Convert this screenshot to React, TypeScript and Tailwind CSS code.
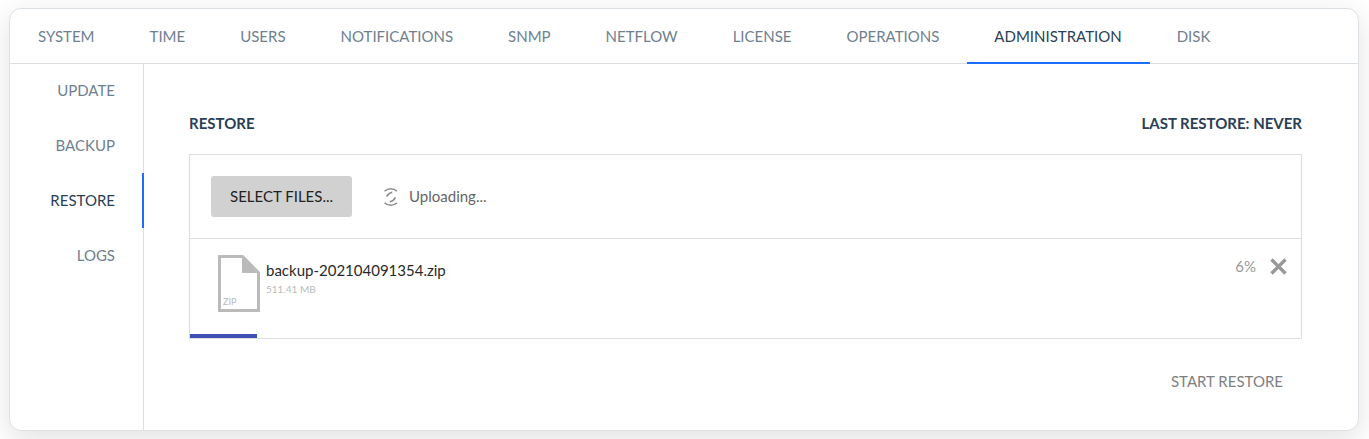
import React from "react";

const tabs = [
  "System",
  "Time",
  "Users",
  "Notifications",
  "SNMP",
  "Netflow",
  "License",
  "Operations",
  "Administration",
  "Disk",
];

const sections = ["Update", "Backup", "Restore", "Logs"];

function Tab({ label, active }: { label: string; active: boolean }) {
  return (
    <a
      href="#"
      aria-current={active ? "page" : undefined}
      className={
        "flex h-full items-center border-b-2 pr-7 pl-[27px] " +
        (active ? "border-[#1a6dff] text-[#2a3f55]" : "border-transparent text-[#6f7f8f]")
      }
    >
      {label}
    </a>
  );
}

function SectionLink({ label, active }: { label: string; active: boolean }) {
  return (
    <a
      href="#"
      aria-current={active ? "page" : undefined}
      className={
        "-mr-px flex h-[55px] items-center justify-end border-r-2 pr-[27px] pb-0.5 " +
        (active ? "border-[#1a6dff] text-[#2a3f55]" : "border-transparent text-[#6f7f8f]")
      }
    >
      {label}
    </a>
  );
}

function Spinner() {
  return (
    <svg viewBox="0 0 16 20" className="h-5 w-4" fill="none" stroke="#8c8c8c" strokeWidth="1.5" aria-hidden="true">
      <path d="M1.5 4.2C5 0.8 10.5 0.8 14 4.2" />
      <path d="M1.5 15.8C5 19.2 10.5 19.2 14 15.8" />
      <path d="M3.6 9.6C4.6 7.4 6.4 5.8 9.2 5.2" />
      <path d="M12.4 10.4C11.4 12.6 9.6 14.2 6.8 14.8" />
    </svg>
  );
}

function FileIcon() {
  return (
    <div className="relative mt-px h-[57px] w-[42px] shrink-0">
      <svg viewBox="0 0 42 57" className="h-full w-full" aria-hidden="true">
        <path d="M1.5 1.5H24.5L40.5 17.5V55.5H1.5Z" fill="none" stroke="#bababa" strokeWidth="3" />
        <path d="M24 0L42 18H24Z" fill="#bababa" />
      </svg>
      <span className="absolute bottom-1 left-[5px] text-[9px] leading-3 text-[#bababa]">ZIP</span>
    </div>
  );
}

export default function App() {
  return (
    <div className="bg-white pt-2 pr-2.5 pb-2 pl-[9px] font-['Lato',sans-serif] text-[15px] leading-6">
      <div className="rounded-xl border border-[#dce1e6] bg-white shadow-[0_8px_30px_rgba(0,0,0,0.12)]">
        <nav className="flex h-[55px] border-b border-[#dcdfe2] pl-px uppercase">
          <div className="-mb-px flex">
            {tabs.map((t) => (
              <Tab key={t} label={t} active={t === "Administration"} />
            ))}
          </div>
        </nav>

        <div className="flex">
          <aside className="w-[134px] shrink-0 border-r border-[#dcdfe2] uppercase">
            <nav className="-mt-px">
              {sections.map((s) => (
                <SectionLink key={s} label={s} active={s === "Restore"} />
              ))}
            </nav>
          </aside>

          <main className="min-w-0 flex-1 pt-[47px] pr-14 pb-[37px] pl-[45px]">
            <div className="flex justify-between font-bold text-[#2a3f55] uppercase">
              <h2>Restore</h2>
              <p>Last restore: never</p>
            </div>

            <div className="mt-[19px] border border-[#dedede]">
              <div className="flex items-center border-b border-[#dedede] p-[21px]">
                <button
                  type="button"
                  className="h-[41px] rounded-[3px] bg-[#d1d1d1] px-[19px] pb-0.5 text-[#222222] uppercase"
                >
                  Select files...
                </button>
                <div className="ml-[31px] flex items-center gap-2.5 text-[#666666]" role="status">
                  <Spinner />
                  <span className="pb-0.5">Uploading...</span>
                </div>
              </div>

              <div className="flex items-start pt-[15px] pr-3.5 pl-7">
                <FileIcon />
                <div className="ml-1.5 pt-1">
                  <p className="text-[#292929]">backup-202104091354.zip</p>
                  <p className="mt-px text-[10px] leading-3 text-[#bababa]">511.41 MB</p>
                </div>
                <div className="ml-auto flex items-center gap-3.5 text-[#999999]">
                  <span>6%</span>
                  <button type="button" aria-label="Cancel upload">
                    <svg viewBox="0 0 17 17" className="h-[17px] w-[17px]" aria-hidden="true">
                      <path d="M1.5 1.5L15.5 15.5M15.5 1.5L1.5 15.5" stroke="#999999" strokeWidth="3.4" />
                    </svg>
                  </button>
                </div>
              </div>
              <div
                role="progressbar"
                aria-label="Upload progress"
                aria-valuenow={6}
                className="mt-[22px] h-1 w-[6%] bg-[#3f51b5]"
              />
            </div>

            <div className="mt-[30px] flex justify-end pr-[19px]">
              <button type="button" className="text-[#7f7f7f] uppercase">
                Start restore
              </button>
            </div>
          </main>
        </div>
      </div>
    </div>
  );
}
